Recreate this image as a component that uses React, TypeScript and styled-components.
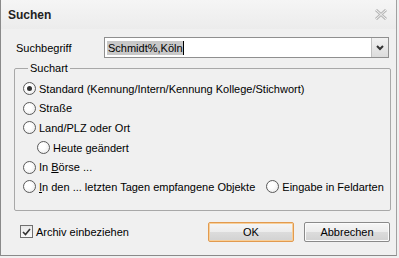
import React from "react";
import styled, { createGlobalStyle } from "styled-components";

const Global = createGlobalStyle`
  html, body { margin: 0; padding: 0; background: #f0f0f0; }
  body { font-family: "Liberation Sans", Arial, sans-serif; font-size: 11px; color: #000; }
`;

const Window = styled.div`
  width: 397px;
  height: 256px;
  box-sizing: border-box;
  border-left: 1px solid #8a8a8a;
  border-right: 1px solid #a0a0a0;
  border-bottom: 1px solid #8a8a8a;
  background: #f0f0f0;
  display: flex;
  flex-direction: column;
`;

const TitleBar = styled.div`
  height: 29px;
  display: flex;
  align-items: center;
  justify-content: space-between;
  padding: 0 9px 0 7px;
  background: linear-gradient(#f5f5f5, #ececec);
`;

const Title = styled.span`
  font-family: "Liberation Sans", Arial, sans-serif;
  font-weight: bold;
  font-size: 12px;
  color: #222;
`;

const Body = styled.div`
  display: flex;
  flex-direction: column;
  padding: 8px 5px 0 13px;
`;

const SearchRow = styled.div`
  display: flex;
  align-items: center;
  height: 21px;
`;

const Label = styled.label`
  width: 88px;
  padding-left: 2px;
`;

const Combo = styled.div`
  flex: 1;
  height: 21px;
  margin-right: 2px;
  box-sizing: border-box;
  border: 1px solid #8f8f8f;
  background: #fff;
  display: flex;
  align-items: stretch;
`;

const ComboText = styled.div`
  flex: 1;
  display: flex;
  align-items: center;
  padding-left: 2px;
`;

const Selected = styled.span`
  background: #c8c8c8;
  padding: 1px 0 1px 1px;
  border-right: 1px solid #000;
`;

const DropBtn = styled.div`
  width: 16px;
  background: linear-gradient(#f2f2f2, #dcdcdc);
  border-left: 1px solid #c0c0c0;
  display: flex;
  align-items: center;
  justify-content: center;
`;

const Group = styled.fieldset`
  margin: 4px 0 0 0;
  padding: 5px 0 13px 8px;
  border: 1px solid #a8a8a8;
  border-radius: 2px;
  display: flex;
  flex-direction: column;
`;

const Legend = styled.legend`
  padding: 0 2px;
  margin-left: 5px;
  font-size: 11px;
`;

const RadioRow = styled.div<{ $indent?: boolean }>`
  display: flex;
  align-items: center;
  height: 19.6px;
  white-space: nowrap;
  padding-left: ${(p) => (p.$indent ? "14px" : "0")};
`;

const RadioItem = styled.span`
  display: inline-flex;
  align-items: center;
  gap: 3px;
`;

const RadioCircle = styled.span<{ $checked?: boolean }>`
  width: 11px;
  height: 11px;
  border-radius: 50%;
  border: 1px solid #5a5a5a;
  background: radial-gradient(circle at 40% 40%, #ffffff 30%, #e4e4e4 100%);
  display: inline-flex;
  align-items: center;
  justify-content: center;
  flex-shrink: 0;
  &::after {
    content: "";
    width: 5px;
    height: 5px;
    border-radius: 50%;
    background: ${(p) => (p.$checked ? "#333" : "transparent")};
  }
`;

const U = styled.span`
  text-decoration: underline;
`;

const Spacer = styled.span`
  width: 11px;
`;

const Footer = styled.div`
  display: flex;
  align-items: center;
  margin-top: 11px;
  padding-left: 6px;
  padding-right: 1px;
`;

const CheckItem = styled.span`
  display: inline-flex;
  align-items: center;
  gap: 3px;
  flex: 1;
`;

const CheckBox = styled.span`
  width: 11px;
  height: 11px;
  border: 1px solid #6f6f6f;
  background: linear-gradient(#e8e8e8, #fafafa);
  display: inline-flex;
  align-items: center;
  justify-content: center;
`;

const Button = styled.button<{ $default?: boolean }>`
  width: 86px;
  height: 20px;
  margin-left: 10px;
  box-sizing: border-box;
  font-family: "Liberation Sans", Arial, sans-serif;
  font-size: 11px;
  color: #000;
  padding: 0;
  border-radius: 2px;
  border: 1px solid ${(p) => (p.$default ? "#e29a4e" : "#8a8a8a")};
  box-shadow: ${(p) => (p.$default ? "inset 0 0 0 1px #f7cf9a" : "inset 0 0 0 1px #fbfbfb")};
  background: linear-gradient(#f6f6f6 0%, #ececec 50%, #dcdcdc 51%, #d2d2d2 100%);
`;

const Radio = ({ checked, children }: { checked?: boolean; children: React.ReactNode }) => (
  <RadioItem>
    <RadioCircle $checked={checked} />
    <span>{children}</span>
  </RadioItem>
);

export default function App() {
  return (
    <>
      <Global />
      <Window>
        <TitleBar>
          <Title>Suchen</Title>
          <svg width="12" height="11" viewBox="0 0 12 11">
            <path d="M1 1 L11 10 M11 1 L1 10" stroke="#b8b8b8" strokeWidth="3" />
            <path d="M1 1 L11 10 M11 1 L1 10" stroke="#f4f4f4" strokeWidth="1" />
          </svg>
        </TitleBar>
        <Body>
          <SearchRow>
            <Label>Suchbegriff</Label>
            <Combo>
              <ComboText>
                <Selected>Schmidt%,Köln</Selected>
              </ComboText>
              <DropBtn>
                <svg width="8" height="6" viewBox="0 0 8 6">
                  <path d="M1 1 L4 4 L7 1" stroke="#333" strokeWidth="2" fill="none" />
                </svg>
              </DropBtn>
            </Combo>
          </SearchRow>
          <Group>
            <Legend>Suchart</Legend>
            <RadioRow>
              <Radio checked>Standard (Kennung/Intern/Kennung Kollege/Stichwort)</Radio>
            </RadioRow>
            <RadioRow>
              <Radio>Straße</Radio>
            </RadioRow>
            <RadioRow>
              <Radio>Land/PLZ oder Ort</Radio>
            </RadioRow>
            <RadioRow $indent>
              <Radio>Heute geändert</Radio>
            </RadioRow>
            <RadioRow>
              <Radio>
                In <U>B</U>örse ...
              </Radio>
            </RadioRow>
            <RadioRow>
              <Radio>
                <U>I</U>n den ... letzten Tagen empfangene Objekte
              </Radio>
              <Spacer />
              <Radio>Eingabe in Feldarten</Radio>
            </RadioRow>
          </Group>
          <Footer>
            <CheckItem>
              <CheckBox>
                <svg width="9" height="8" viewBox="0 0 9 8">
                  <path d="M1 4 L3.5 6.5 L8 1" stroke="#333" strokeWidth="1.6" fill="none" />
                </svg>
              </CheckBox>
              Archiv einbeziehen
            </CheckItem>
            <Button $default>OK</Button>
            <Button>Abbrechen</Button>
          </Footer>
        </Body>
      </Window>
    </>
  );
}
